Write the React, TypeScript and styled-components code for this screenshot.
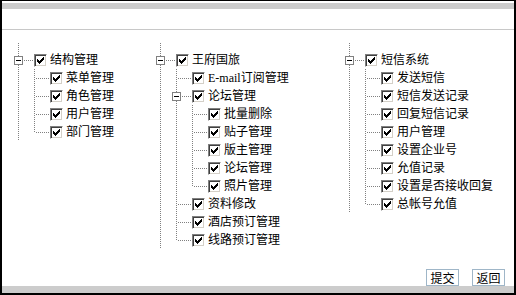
import React from "react";
import styled, { createGlobalStyle } from "styled-components";

const Global = createGlobalStyle`
  html, body { margin: 0; padding: 0; background: #fff; }
  body {
    font-family: "Liberation Serif", "Noto Sans CJK SC", serif;
    font-size: 12px;
    color: #000;
  }
`;

const DOT = "#808080";
const vFull = `repeating-linear-gradient(to bottom, ${DOT} 0 1px, transparent 1px 2px) 8px 0 / 1px 100% no-repeat`;
const vTop = `repeating-linear-gradient(to bottom, ${DOT} 0 1px, transparent 1px 2px) 8px 0 / 1px 9px no-repeat`;
const hRight = `repeating-linear-gradient(to right, ${DOT} 0 1px, transparent 1px 2px) 10px 9px / 14px 1px no-repeat`;

const Frame = styled.div`
  box-sizing: border-box;
  width: 516px;
  height: 295px;
  border: 2px solid #000;
  border-top-width: 1px;
  display: flex;
  flex-direction: column;
  background: #fff;
`;

const TopBar = styled.div`
  height: 6px;
  margin-top: 2px;
  background: #cccccc;
`;

const Header = styled.div`
  height: 20px;
  border-bottom: 1px solid #c8c8c8;
`;

const Body = styled.div`
  flex: 1;
  display: grid;
  grid-template-columns: 142px 189px 1fr;
  align-items: start;
  padding: 13px 0 0 8px;
`;

const Footer = styled.div`
  height: 18px;
  display: flex;
  justify-content: flex-end;
  align-items: flex-end;
  gap: 13px;
  padding-right: 9px;
`;

const Button = styled.button`
  box-sizing: border-box;
  width: 33px;
  height: 17px;
  padding: 0;
  border: 1px solid #9fb6c8;
  background: #fff;
  font: 12px/15px "Noto Sans CJK SC", sans-serif;
  color: #000;
`;

const BottomBar = styled.div`
  height: 7px;
  background: #cccccc;
`;

const Column = styled.div`
  display: flex;
  flex-direction: column;
`;

const Spacer = styled.div`
  width: 16px;
  height: 8px;
  background: ${vFull};
`;

const Row = styled.div`
  display: flex;
  align-items: center;
  height: 18px;
  white-space: nowrap;
`;

type CellKind = "pipe" | "blank" | "root" | "tee" | "ell";

const Cell = styled.span<{ $kind: CellKind }>`
  flex: none;
  align-self: stretch;
  display: flex;
  align-items: center;
  width: ${(p) => (p.$kind === "pipe" || p.$kind === "blank" ? 16 : 24)}px;
  background: ${(p) =>
    p.$kind === "pipe"
      ? vFull
      : p.$kind === "blank"
      ? "none"
      : p.$kind === "ell"
      ? `${hRight}, ${vTop}`
      : `${hRight}, ${vFull}`};
`;

const Expander = styled.span`
  box-sizing: border-box;
  width: 9px;
  height: 9px;
  margin-left: 4px;
  border: 1px solid #808080;
  background: #fff;
  display: flex;
  align-items: center;
  justify-content: center;
  &::after {
    content: "";
    width: 5px;
    height: 1px;
    background: #000;
  }
`;

const Check = styled.span`
  box-sizing: border-box;
  flex: none;
  width: 13px;
  height: 13px;
  border: 1px solid;
  border-color: #808080 #ffffff #ffffff #808080;
  box-shadow: inset 1px 1px 0 #404040, inset -1px -1px 0 #d4d0c8;
  background: #fff;
  display: flex;
  align-items: center;
  justify-content: center;
`;

const Label = styled.span`
  margin-left: 3px;
  line-height: 14px;
`;

const CheckMark = () => (
  <svg width="7" height="7" viewBox="0 0 7 7" shapeRendering="crispEdges">
    <path
      fill="#000"
      d="M6 0h1v1h-1z M5 1h2v1h-2z M0 2h1v1h-1z M4 2h3v1h-3z M0 3h2v1h-2z M3 3h3v1h-3z M0 4h5v1h-5z M1 5h3v1h-3z M2 6h1v1h-1z"
    />
  </svg>
);

type TreeNode = { label: string; children?: TreeNode[] };

const trees: TreeNode[] = [
  {
    label: "结构管理",
    children: [
      { label: "菜单管理" },
      { label: "角色管理" },
      { label: "用户管理" },
      { label: "部门管理" },
    ],
  },
  {
    label: "王府国旅",
    children: [
      { label: "E-mail订阅管理" },
      {
        label: "论坛管理",
        children: [
          { label: "批量删除" },
          { label: "贴子管理" },
          { label: "版主管理" },
          { label: "论坛管理" },
          { label: "照片管理" },
        ],
      },
      { label: "资料修改" },
      { label: "酒店预订管理" },
      { label: "线路预订管理" },
    ],
  },
  {
    label: "短信系统",
    children: [
      { label: "发送短信" },
      { label: "短信发送记录" },
      { label: "回复短信记录" },
      { label: "用户管理" },
      { label: "设置企业号" },
      { label: "允值记录" },
      { label: "设置是否接收回复" },
      { label: "总帐号允值" },
    ],
  },
];

type FlatRow = {
  key: string;
  label: string;
  cells: CellKind[];
  expander: boolean;
};

function flatten(
  node: TreeNode,
  depth: number,
  lastFlags: boolean[],
  isLast: boolean,
  key: string,
  out: FlatRow[]
) {
  const cells: CellKind[] = [];
  if (depth === 0) {
    cells.push("root");
  } else {
    cells.push("pipe");
    for (let k = 1; k < depth; k++) cells.push(lastFlags[k] ? "blank" : "pipe");
    cells.push(isLast ? "ell" : "tee");
  }
  out.push({ key, label: node.label, cells, expander: !!node.children });
  const kids = node.children || [];
  kids.forEach((c, i) =>
    flatten(c, depth + 1, [...lastFlags, isLast], i === kids.length - 1, `${key}-${i}`, out)
  );
}

const TreeColumn = ({ tree, idx }: { tree: TreeNode; idx: number }) => {
  const rows: FlatRow[] = [];
  flatten(tree, 0, [], true, `t${idx}`, rows);
  return (
    <Column>
      <Spacer />
      {rows.map((r) => (
        <Row key={r.key}>
          {r.cells.map((c, i) => (
            <Cell key={i} $kind={c}>
              {i === r.cells.length - 1 && r.expander ? <Expander /> : null}
            </Cell>
          ))}
          <Check>
            <CheckMark />
          </Check>
          <Label>{r.label}</Label>
        </Row>
      ))}
    </Column>
  );
};

export default function App() {
  return (
    <>
      <Global />
      <Frame>
        <TopBar />
        <Header />
        <Body>
          {trees.map((t, i) => (
            <TreeColumn key={i} tree={t} idx={i} />
          ))}
        </Body>
        <Footer>
          <Button>提交</Button>
          <Button>返回</Button>
        </Footer>
        <BottomBar />
      </Frame>
    </>
  );
}
